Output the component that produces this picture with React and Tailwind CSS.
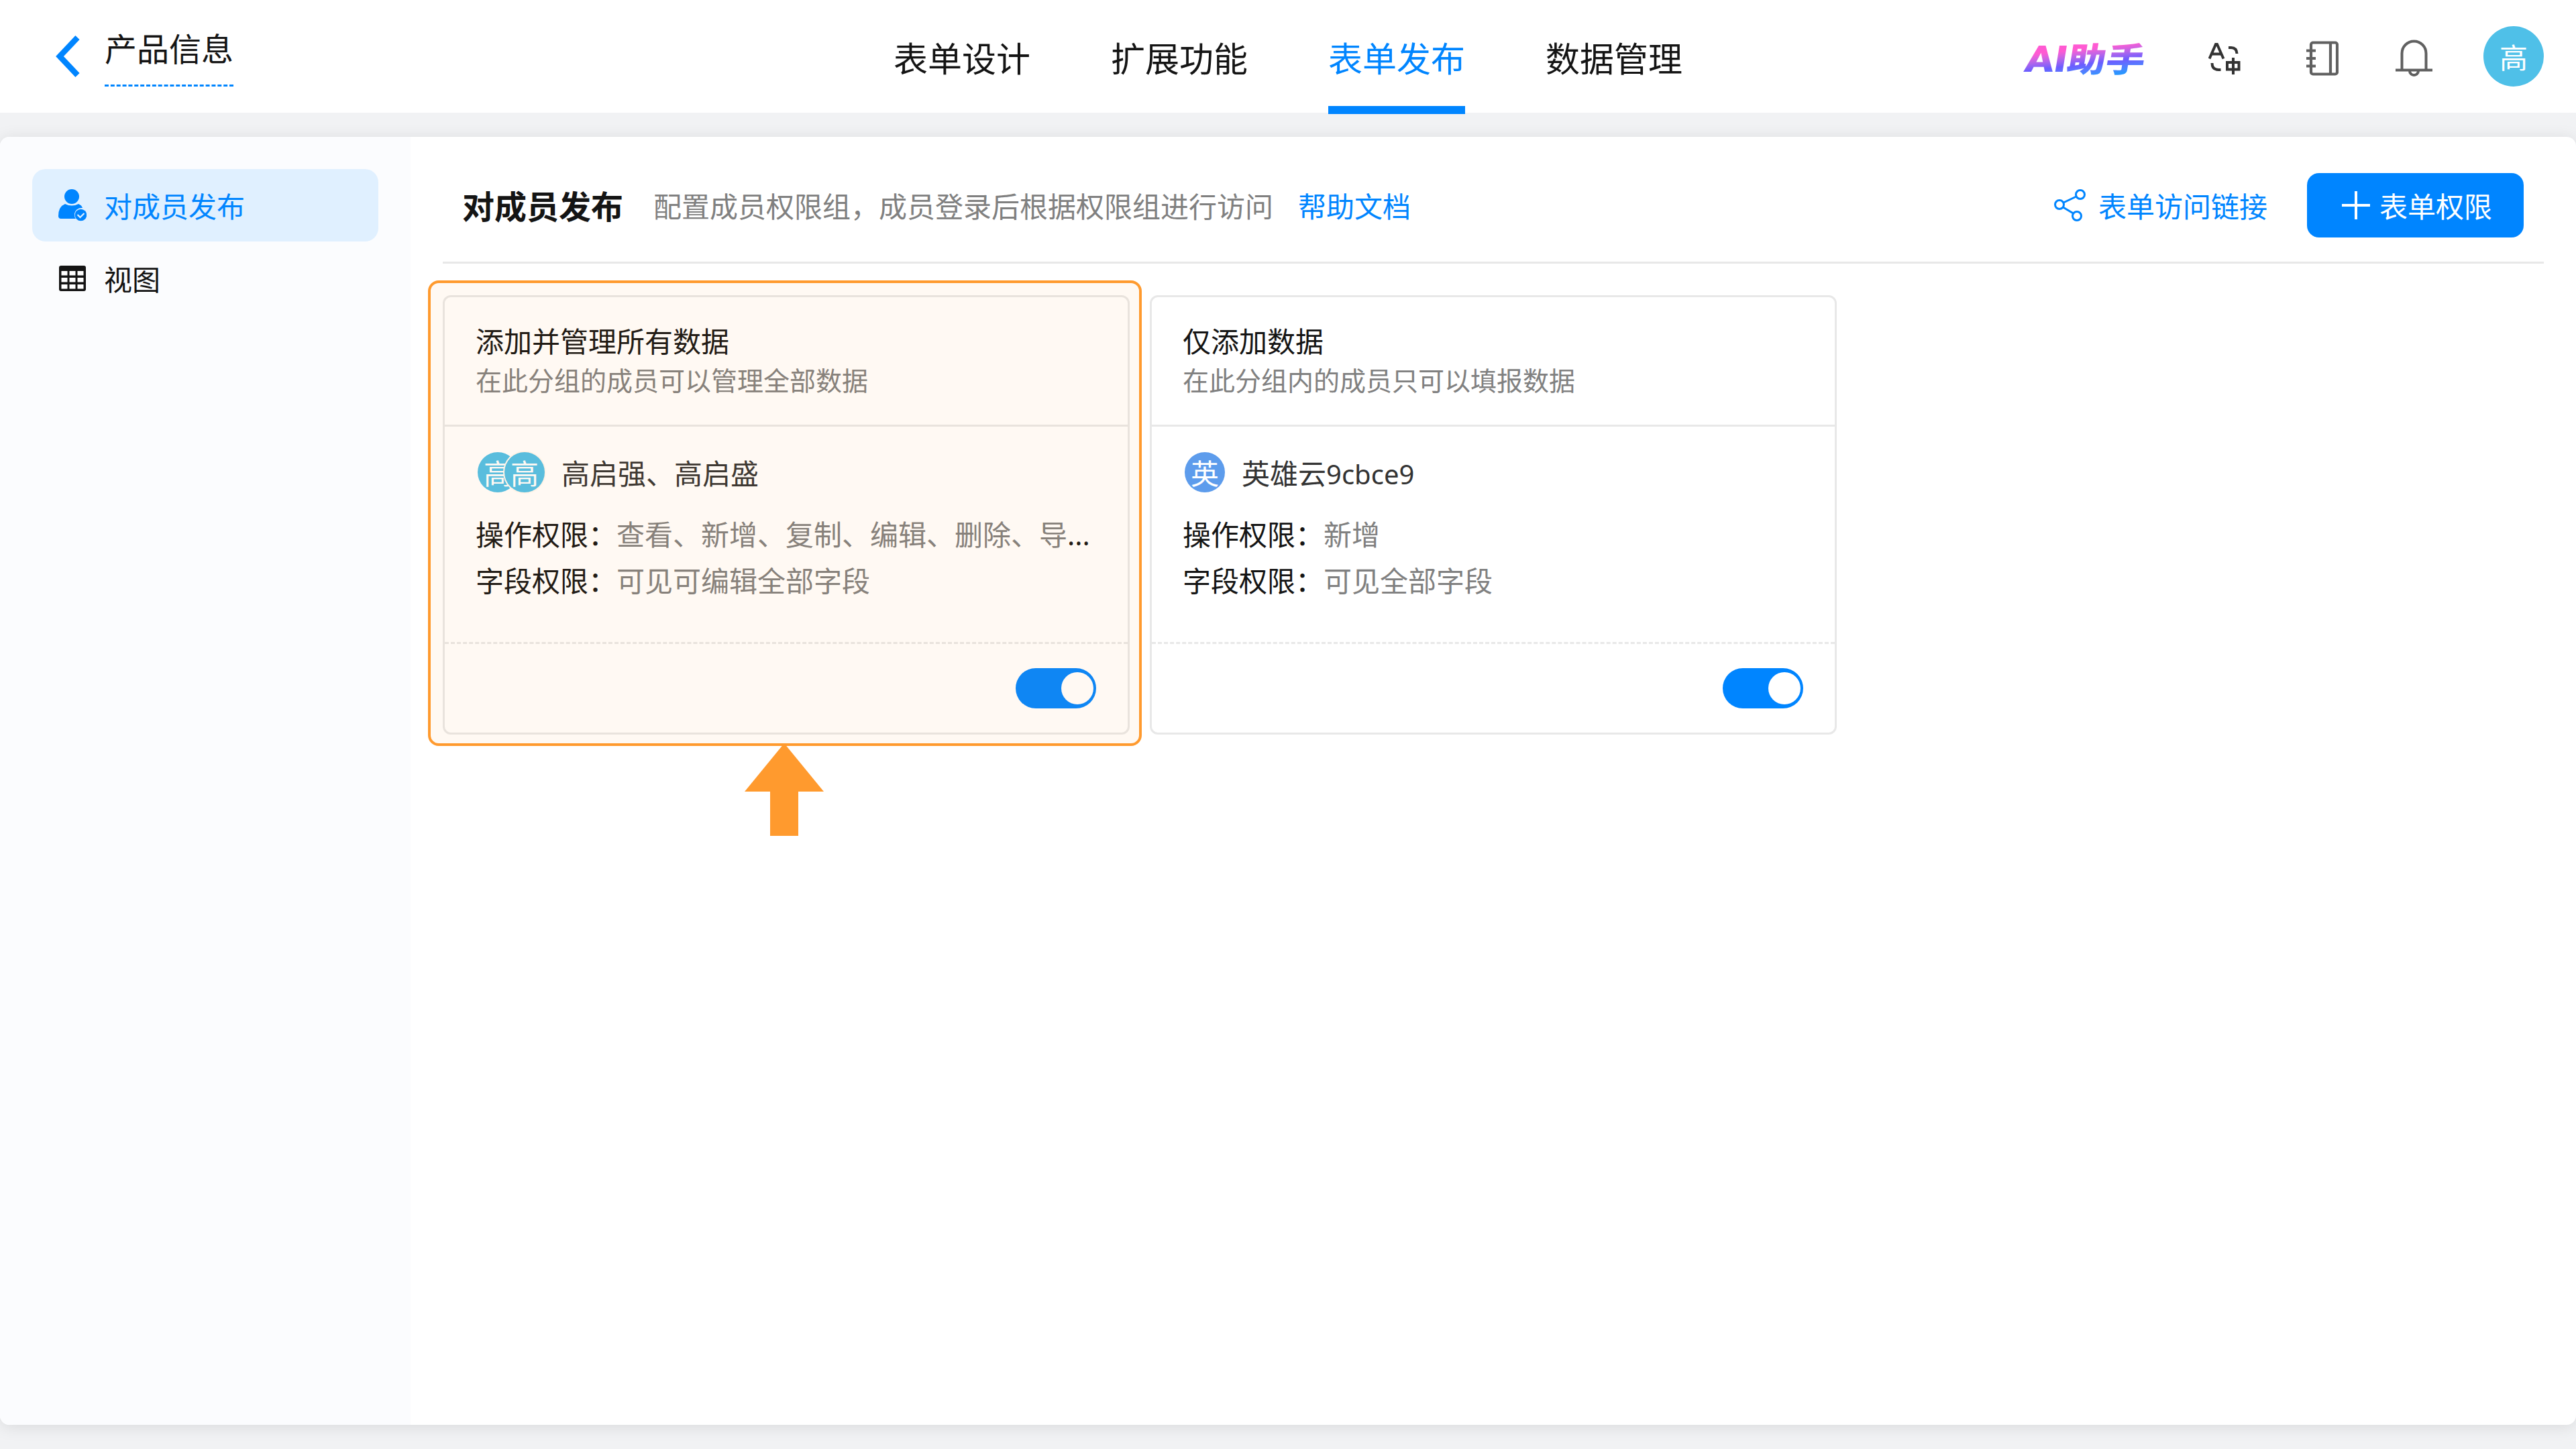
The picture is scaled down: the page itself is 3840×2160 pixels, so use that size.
import React, { useState } from "react";

const TABS = [
    { id: "design", label: "表单设计" },
    { id: "extend", label: "扩展功能" },
    { id: "publish", label: "表单发布" },
    { id: "data", label: "数据管理" },
];

const GROUPS = [
    {
        id: 1,
        title: "添加并管理所有数据",
        desc: "在此分组的成员可以管理全部数据",
        avatars: ["高", "高"],
        avatarColor: "bg-[#4fc0e8]",
        members: "高启强、高启盛",
        actions: "查看、新增、复制、编辑、删除、导",
        hasMore: true,
        fields: "可见可编辑全部字段",
    },
    {
        id: 2,
        title: "仅添加数据",
        desc: "在此分组内的成员只可以填报数据",
        avatars: ["英"],
        avatarColor: "bg-[#5d9cec]",
        members: "英雄云",
        suffix: "9cbce9",
        actions: "新增",
        fields: "可见全部字段",
    },
];

function BackIcon() {
    return (
        <svg className="w-9 h-[62px]" viewBox="0 0 36 62" fill="none" stroke="#0085ff" strokeWidth="8.5">
            <path d="M32.5 3L6 31L32.5 59" />
        </svg>
    );
}

function MemberIcon() {
    return (
        <svg className="w-[42px] h-12" viewBox="0 0 42 48">
            <circle cx="20" cy="11" r="11" fill="#0085ff" />
            <path d="M10 22q10 5 20 0q5 2 6 6a10.500 10.500 0 0 0-12 10q0 4 2 6H4q-4 0-4-4q0-14 10-18z" fill="#0085ff" />
            <circle cx="33.500" cy="38.500" r="8.800" fill="#0085ff" />
            <path d="M28.500 38l4 4L38.500 36" fill="none" stroke="#e0f0ff" strokeWidth="2.200" />
        </svg>
    );
}

function TableIcon() {
    return (
        <svg className="w-10 h-[38px]" viewBox="0 0 40 38">
            <rect width="40" height="38" rx="3" fill="#141414" />
            {[8, 18, 28].map((y) =>
                [3.5, 15.5, 27.5].map((x) => <rect key={`${x}-${y}`} x={x} y={y} width="9" height="6.500" fill="#fff" />)
            )}
        </svg>
    );
}

function TranslateIcon() {
    return (
        <svg className="w-12 h-12" viewBox="0 0 48 48" fill="none" stroke="#333" strokeWidth="4">
            <path d="M1.500 24.500L11 3h2l9.500 21.500M5 17.500h14" />
            <path d="M30 8h4q8 0 8.500 9M5.500 31q0 10 9.500 10h3.500" />
            <path d="M28 30h17.500v10.500H28zM37 23v25" />
        </svg>
    );
}

function BookIcon() {
    return (
        <svg className="w-12 h-[52px]" viewBox="0 0 48 52" fill="none" stroke="#606060" strokeWidth="4.200">
            <rect x="7" y="2.500" width="39" height="47" rx="3" />
            <path d="M36 2v48M0 14.500h14M0 26h14M0 37.500h14" />
        </svg>
    );
}

function BellIcon() {
    return (
        <svg className="w-14 h-14" viewBox="0 0 56 56" fill="none" stroke="#606060" strokeWidth="4">
            <path d="M9.500 45V20.500a18 18 0 0 1 36 0V45M0 45.500h55M21 46.500a6.500 6.500 0 0 0 13 0" />
        </svg>
    );
}

function ShareIcon() {
    return (
        <svg className="w-12 h-12" viewBox="0 0 48 48" fill="none" stroke="#0085ff" strokeWidth="3">
            <circle cx="39" cy="8" r="6.500" />
            <circle cx="8" cy="23" r="6.500" />
            <circle cx="34" cy="40" r="6.500" />
            <path d="M14 20L33 11M13.500 27L28.500 36" />
        </svg>
    );
}

function Header({ activeTab, setActiveTab }) {
    return (
        <header className="grid grid-cols-3 h-[168px] bg-white">
            <div className="flex items-start pl-[83px]">
                <div className="mt-[53px]">
                    <BackIcon />
                </div>
                <div className="ml-[37px] mt-[38px] h-[91px] border-b-3 border-dashed border-[#0085ff] text-[48px] leading-[70px]">
                    产品信息
                </div>
            </div>

            <nav className="flex justify-center gap-[120px]">
                {TABS.map((tab) => (
                    <button
                        key={tab.id}
                        onClick={() => setActiveTab(tab.id)}
                        className={`h-[170px] pt-4 text-[51px] whitespace-nowrap border-b-12 ${activeTab === tab.id
                            ? "border-[#0085ff] text-[#0085ff]"
                            : "border-transparent"
                            }`}
                    >
                        {tab.label}
                    </button>
                ))}
            </nav>

            <div className="flex items-center justify-end pr-12 pt-1">
                <span className="mr-[85px] mt-1 px-2 origin-right scale-x-116 -skew-x-8 bg-linear-172 from-[#ff5ad2] from-30% via-[#6b5cff] via-58% to-[#2b95ff] to-80% bg-clip-text text-transparent text-[50px] leading-[60px] font-black whitespace-nowrap font-['Roboto','Noto_Sans_CJK_SC',sans-serif]">
                    <span className="text-[55px]">AI</span>助手
                </span>
                <TranslateIcon />
                <div className="ml-[98px]">
                    <BookIcon />
                </div>
                <div className="ml-[85px]">
                    <BellIcon />
                </div>
                <div className="ml-[75px] -mt-1.5 flex items-center justify-center size-[90px] rounded-full bg-[#4fc0e8] text-white text-[42px]">
                    <span className="pt-[3px]">高</span>
                </div>
            </div>
        </header>
    );
}

function Sidebar() {
    return (
        <aside className="w-[612px] px-12 pt-12 bg-[#fbfcfe]">
            <div className="flex items-center h-[108px] pl-[39px] rounded-[20px] bg-[#e0f0ff] text-[#0085ff]">
                <MemberIcon />
                <span className="ml-[26px] pt-[3px]">对成员发布</span>
            </div>
            <div className="flex items-center h-[110px] pl-10">
                <TableIcon />
                <span className="ml-[27px] pt-[3px]">视图</span>
            </div>
        </aside>
    );
}

function GroupCard({ group }) {
    const [enabled, setEnabled] = useState(true);

    return (
        <div className="w-[1024px] h-[655px] flex flex-col border-3 border-[#e8e8e8] rounded-xl bg-white">
            <div className="h-[193px] px-[46px] pt-[37px] border-b-3 border-[#e8e8e8]">
                <h3 className="leading-[58px]">{group.title}</h3>
                <p className="text-[39px] leading-[58px] text-[#808080]">{group.desc}</p>
            </div>

            <div className="flex-1 px-[46px] pt-[35px]">
                <div className="flex items-center h-[66px] mb-[25px]">
                    <div className="flex pl-[3px]">
                        {group.avatars.map((name, index) => (
                            <div
                                key={index}
                                className={`flex items-center justify-center size-[60px] rounded-full text-white ${group.avatarColor} ${index > 0 ? "-ml-5 ring-2 ring-[#fff9f2]" : ""}`}
                            >
                                <span className="pt-[3px]">{name}</span>
                            </div>
                        ))}
                    </div>
                    <span className="ml-[25px] mt-[3px] text-[#333]">
                        {group.members}
                        {group.suffix && <span className="text-[40px]">{group.suffix}</span>}
                    </span>
                </div>
                <p className="leading-[69px] whitespace-nowrap">
                    操作权限：<span className="text-[#808080]">{group.actions}</span>{group.hasMore && "..."}
                </p>
                <p className="leading-[69px]">
                    字段权限：<span className="text-[#808080]">{group.fields}</span>
                </p>
            </div>

            <div className="flex items-center justify-end h-[135px] px-[47px] border-t-3 border-dashed border-[#e8e8e8]">
                <button
                    onClick={() => setEnabled(!enabled)}
                    className={`flex items-center w-[120px] h-[60px] px-1 rounded-full ${enabled ? "justify-end bg-[#0085ff]" : "justify-start bg-gray-300"}`}
                >
                    <span className="size-12 rounded-full bg-white" />
                </button>
            </div>
        </div>
    );
}

export default function App() {
    const [activeTab, setActiveTab] = useState("publish");

    return (
        <div className="flex flex-col w-[3840px] h-[2160px] overflow-hidden bg-[#f1f2f4] text-[#141414] text-[42px] font-['Noto_Sans','Noto_Sans_CJK_SC',sans-serif]">
            <Header activeTab={activeTab} setActiveTab={setActiveTab} />

            <div className="flex mt-9 h-[1920px] rounded-[14px] overflow-hidden bg-white shadow-[0_3px_24px_rgba(0,0,0,0.1)]">
                <Sidebar />

                <main className="flex-1 pl-12 pr-12">
                    <div className="flex items-center h-[189px] pl-[29px] pr-[30px] pt-[18px] border-b-3 border-[#e8e8e8]">
                        <h2 className="pt-[3px] text-[48px] font-bold">对成员发布</h2>
                        <p className="ml-[45px] pt-[3px] text-[#808080]">配置成员权限组，成员登录后根据权限组进行访问</p>
                        <a className="ml-[37px] pt-[3px] text-[#0085ff]">帮助文档</a>
                        <a className="ml-auto flex items-center text-[#0085ff]">
                            <ShareIcon />
                            <span className="ml-[18px] pt-[3px]">表单访问链接</span>
                        </a>
                        <button className="ml-[59px] flex items-center w-[323px] h-24 pl-[52px] rounded-[18px] bg-[#0085ff] text-white">
                            <svg className="w-[42px] h-[42px]" viewBox="0 0 42 42" stroke="#fff" strokeWidth="4">
                                <path d="M0 21h42M21 0v42" />
                            </svg>
                            <span className="ml-[14px] pt-[3px]">表单权限</span>
                        </button>
                    </div>

                    <div className="flex gap-[30px] pt-[47px]">
                        {GROUPS.map((group) => (
                            <div key={group.id} className="relative">
                                <GroupCard group={group} />
                                {group.id === 1 && (
                                    <div className="absolute -left-[22px] -right-[18px] -top-[22px] -bottom-[17px] border-4 border-[#ff9a2e] rounded-2xl bg-[#ff9a2e]/6 pointer-events-none">
                                        <svg className="absolute top-full left-1/2 -translate-x-[60px] w-[118px] h-[138px]" viewBox="0 0 118 138">
                                            <path d="M59 0L118 72H80V138H38V72H0z" fill="#ff9a2e" />
                                        </svg>
                                    </div>
                                )}
                            </div>
                        ))}
                    </div>
                </main>
            </div>
        </div>
    );
}
